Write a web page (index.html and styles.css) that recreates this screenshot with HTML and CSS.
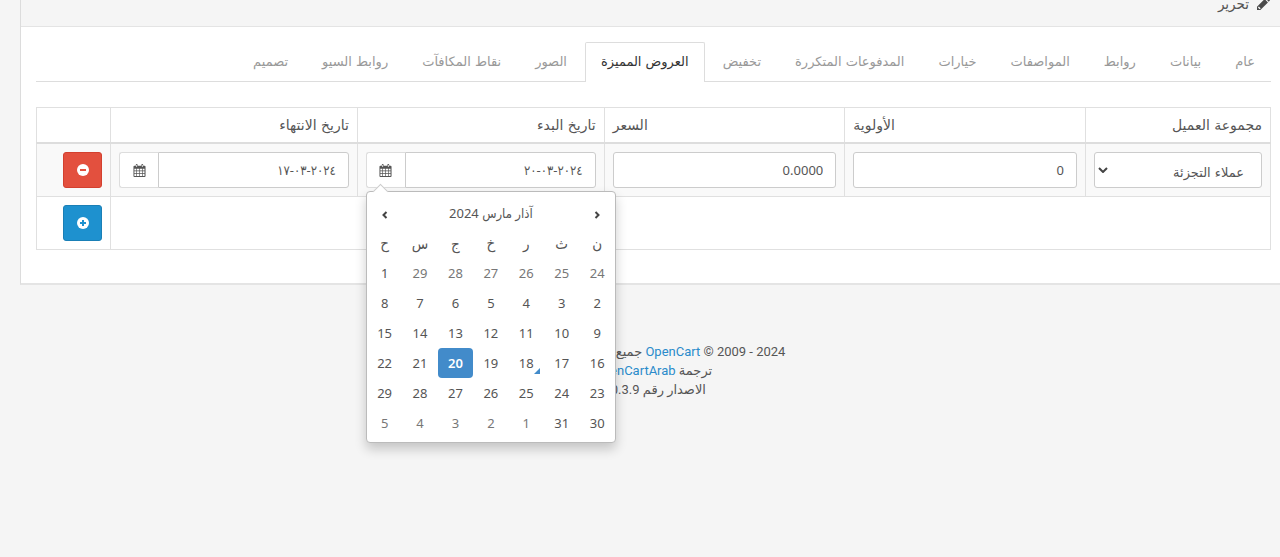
FILE: index.html
```html
<!DOCTYPE html>
<html lang="ar" dir="rtl">
<head>
<meta charset="utf-8">
<title>تحرير</title>
<link rel="stylesheet" href="styles.css">
</head>
<body>
<svg class="sprite" aria-hidden="true">
  <symbol id="calendar" viewBox="0 0 14 14"><path fill-rule="evenodd" d="M1.5 2H3V1q0-1 1-1t1 1v1h4V1q0-1 1-1t1 1v1h1.500q1 0 1 1v10q0 1-1 1h-11q-1 0-1-1V3q0-1 1-1zM3.600 1v2.200h.8V1zM9.600 1v2.200h.8V1zM1.500 5v2h2V5zM4.200 5v2h2.400V5zM7.300 5v2h2.400V5zM10.400 5v2h2V5zM1.500 7.700v2h2v-2zM4.200 7.700v2h2.400v-2zM7.300 7.700v2h2.400v-2zM10.400 7.700v2h2v-2zM1.500 10.400V13h2v-2.600zM4.200 10.400V13h2.400v-2.600zM7.300 10.400V13h2.400v-2.600zM10.400 10.400V13h2v-2.600z"/></symbol>
</svg>
<main class="panel">
  <header class="panel-heading">
    <svg class="pencil" viewBox="0 0 14 14" aria-hidden="true"><path fill-rule="evenodd" d="M0 14v-3.600L8.200 2.200l3.600 3.600L3.600 14zM1.200 11v1h1v.9h1l.8-.8-2-2zM9 1.400 10 .4q.8-.7 1.600 0l2 2q.8.800 0 1.600l-1 1z"/></svg>
    <h1 class="title">تحرير</h1>
  </header>
  <div class="panel-body">
    <nav class="tabs">
      <a class="tab" href="#general">عام</a>
      <a class="tab" href="#data">بيانات</a>
      <a class="tab" href="#links">روابط</a>
      <a class="tab" href="#attribute">المواصفات</a>
      <a class="tab" href="#option">خيارات</a>
      <a class="tab" href="#recurring">المدفوعات المتكررة</a>
      <a class="tab" href="#discount">تخفيض</a>
      <a class="tab active" href="#special">العروض المميزة</a>
      <a class="tab" href="#image">الصور</a>
      <a class="tab" href="#reward">نقاط المكافآت</a>
      <a class="tab" href="#seo">روابط السيو</a>
      <a class="tab" href="#design">تصميم</a>
    </nav>
    <table class="specials">
      <colgroup><col class="c-group"><col class="c-number"><col class="c-number"><col class="c-date"><col class="c-date"><col class="c-action"></colgroup>
      <thead>
        <tr><th>مجموعة العميل</th><th class="end">الأولوية</th><th class="end">السعر</th><th>تاريخ البدء</th><th>تاريخ الانتهاء</th><th></th></tr>
      </thead>
      <tbody>
        <tr class="striped">
          <td><div class="select-wrap"><select class="control select" aria-label="مجموعة العميل"><option>عملاء التجزئة</option></select><svg class="chevron" viewBox="0 0 10 6" aria-hidden="true"><path d="M1 1l4 4 4-4"/></svg></div></td>
          <td><input class="control" type="text" value="0" aria-label="الأولوية"></td>
          <td><input class="control" type="text" value="0.0000" aria-label="السعر"></td>
          <td>
            <div class="date">
              <input class="control" type="text" value="٢٠٢٤-٠٣-٢٠" aria-label="تاريخ البدء">
              <button class="date-button" type="button" aria-label="فتح التقويم"><svg class="icon"><use href="#calendar"/></svg></button>
              <div class="picker">
                <table class="days">
                  <thead>
                    <tr><th><button class="step" type="button" aria-label="السابق"><svg class="arrow" viewBox="0 0 6 8"><path d="M1.500 1l3 3-3 3"/></svg></button></th><th class="month" colspan="5">آذار مارس 2024</th><th><button class="step" type="button" aria-label="التالي"><svg class="arrow" viewBox="0 0 6 8"><path d="M4.500 1l-3 3 3 3"/></svg></button></th></tr>
                    <tr class="weekdays"><th>ن</th><th>ث</th><th>ر</th><th>خ</th><th>ج</th><th>س</th><th>ح</th></tr>
                  </thead>
                  <tbody>
                    <tr><td class="muted">24</td><td class="muted">25</td><td class="muted">26</td><td class="muted">27</td><td class="muted">28</td><td class="muted">29</td><td>1</td></tr>
                    <tr><td>2</td><td>3</td><td>4</td><td>5</td><td>6</td><td>7</td><td>8</td></tr>
                    <tr><td>9</td><td>10</td><td>11</td><td>12</td><td>13</td><td>14</td><td>15</td></tr>
                    <tr><td>16</td><td>17</td><td class="today">18</td><td>19</td><td class="selected">20</td><td>21</td><td>22</td></tr>
                    <tr><td>23</td><td>24</td><td>25</td><td>26</td><td>27</td><td>28</td><td>29</td></tr>
                    <tr><td>30</td><td>31</td><td class="muted">1</td><td class="muted">2</td><td class="muted">3</td><td class="muted">4</td><td class="muted">5</td></tr>
                  </tbody>
                </table>
              </div>
            </div>
          </td>
          <td>
            <div class="date">
              <input class="control" type="text" value="٢٠٢٤-٠٣-١٧" aria-label="تاريخ الانتهاء">
              <button class="date-button" type="button" aria-label="فتح التقويم"><svg class="icon"><use href="#calendar"/></svg></button>
            </div>
          </td>
          <td><button class="action remove" type="button" aria-label="حذف"><svg class="round" viewBox="0 0 12 12"><circle cx="6" cy="6" r="6"/><path d="M3 6h6"/></svg></button></td>
        </tr>
        <tr>
          <td colspan="5"></td>
          <td><button class="action add" type="button" aria-label="إضافة"><svg class="round" viewBox="0 0 12 12"><circle cx="6" cy="6" r="6"/><path d="M3 6h6M6 3v6"/></svg></button></td>
        </tr>
      </tbody>
    </table>
  </div>
</main>
<footer class="footer">
  <p><bdi dir="ltr">2009 - 2024</bdi> © <a href="#opencart">OpenCart</a> جميع الحقوق محفوظة.</p>
  <p>ترجمة <a href="#arab">OpenCartArab</a></p>
  <p>الاصدار رقم <bdi>3.0.3.9</bdi></p>
</footer>
</body>
</html>
```
FILE: styles.css
```css
* { box-sizing: border-box; }
body {
  margin: 0;
  min-height: 100vh;
  display: flow-root;
  background: #f5f5f5;
  color: #555;
  font: 13px/18px "Noto Sans", "DejaVu Sans Condensed", "DejaVu Sans", sans-serif;
}
.sprite { display: none; }
button, input, select { font: inherit; color: inherit; margin: 0; }
button { cursor: pointer; }
a { color: #2a8bcb; text-decoration: none; }
.panel {
  margin: -13px 0 0 20px;
  background: #fff;
  border-left: 1px solid #dcdcdc;
  border-bottom: 2px solid #e4e4e4;
}
.panel-heading {
  display: flex;
  align-items: center;
  gap: 8px;
  padding: 6px 10px 13px;
  background: #f5f5f5;
  border-bottom: 1px solid #e4e4e4;
}
.title { margin: 0; font-size: 15px; line-height: 20px; font-weight: 400; }
.pencil { width: 13px; height: 13px; fill: #4a4a4a; }
.panel-body { padding: 15px 9px 33px 15px; }
.tabs {
  display: flex;
  margin-bottom: 25px;
  border-bottom: 1px solid #ddd;
  font-family: "DejaVu Sans", sans-serif;
}
.tab {
  margin: 0 0 -1px 2px;
  padding: 9px 15px 11px;
  border: 1px solid transparent;
  border-bottom: 0;
  border-radius: 2px 2px 0 0;
  color: #999;
  line-height: 19px;
  white-space: nowrap;
}
.tab.active { background: #fff; border-color: #ddd; color: #333; }
.specials { width: 100%; table-layout: fixed; border-collapse: collapse; }
.c-group { width: 15%; }
.c-number { width: 19.5%; }
.c-date { width: 20%; }
.c-action { width: 6%; }
.specials > thead > tr > th, .specials > tbody > tr > td {
  padding: 8px;
  border: 1px solid #e0e0e0;
  text-align: start;
  font-weight: 400;
}
.specials > thead > tr > th {
  border-bottom: 2px solid #ddd;
  font-family: "DejaVu Sans", sans-serif;
  font-size: 14px;
}
.specials > thead > tr > .end { text-align: end; }
.striped { background: #f9f9f9; }
.control {
  display: block;
  width: 100%;
  height: 36px;
  padding: 8px 12px;
  background: #fff;
  border: 1px solid #ccc;
  border-radius: 3px;
}
.select-wrap { display: grid; align-items: center; }
.select-wrap > * { grid-area: 1 / 1; }
.select { appearance: none; padding: 10px 17px 4px; font-family: "DejaVu Sans", sans-serif; }
.chevron { justify-self: end; width: 10px; height: 6px; margin-left: 4px; fill: none; stroke: #444; stroke-width: 2; pointer-events: none; }
.date { position: relative; display: flex; }
.date .control { flex: 1; min-width: 0; border-radius: 0 3px 3px 0; }
.date-button {
  width: 39px;
  padding: 0;
  background: #fff;
  border: 1px solid #ddd;
  border-right: 0;
  border-radius: 3px 0 0 3px;
}
.icon { display: block; width: 13px; height: 13px; margin: 0 auto; fill: #555; }
.action { width: 39px; height: 36px; padding: 0; border: 1px solid; border-radius: 3px; vertical-align: top; }
.remove { background: #e3503e; border-color: #d3402f; color: #e3503e; }
.add { background: #1e91cf; border-color: #1a7fb6; color: #1e91cf; }
.round { display: block; width: 12px; height: 12px; margin: 0 auto; fill: #fff; stroke: none; }
.round path { stroke: currentColor; stroke-width: 2; }
.picker {
  position: absolute;
  z-index: 2;
  top: 39px;
  left: 0;
  width: 250px;
  padding: 6px 0 4px;
  background: #fff;
  border: 1px solid #bbb;
  border-radius: 4px;
  box-shadow: 0 6px 12px rgba(0, 0, 0, .2);
}
.picker::before {
  content: "";
  position: absolute;
  top: -6px;
  left: 8px;
  width: 10px;
  height: 10px;
  background: #fff;
  border: 1px solid #ccc;
  border-right: 0;
  border-bottom: 0;
  transform: rotate(45deg);
}
.days { position: relative; width: 100%; table-layout: fixed; border-collapse: collapse; text-align: center; }
.days th, .days td { height: 30px; padding: 0; font-weight: 400; line-height: 18px; }
.days .weekdays th { font-size: 15px; }
.days .muted { color: #777; }
.days .selected { background: #428bca; color: #fff; border-radius: 4px; font-weight: 600; }
.today { position: relative; }
.today::after {
  content: "";
  position: absolute;
  right: 4px;
  bottom: 4px;
  border-left: 6px solid transparent;
  border-bottom: 6px solid #428bca;
}
.step { display: block; width: 100%; height: 30px; padding: 3px 0 0; background: none; border: 0; }
.arrow { display: block; width: 6px; height: 8px; margin: 0 auto; fill: none; stroke: #444; stroke-width: 2; }
.footer {
  padding: 57px 0 0 26px;
  font-family: Roboto, "DejaVu Sans", sans-serif;
  text-align: center;
  line-height: 19px;
}
.footer p { margin: 0; }
```
